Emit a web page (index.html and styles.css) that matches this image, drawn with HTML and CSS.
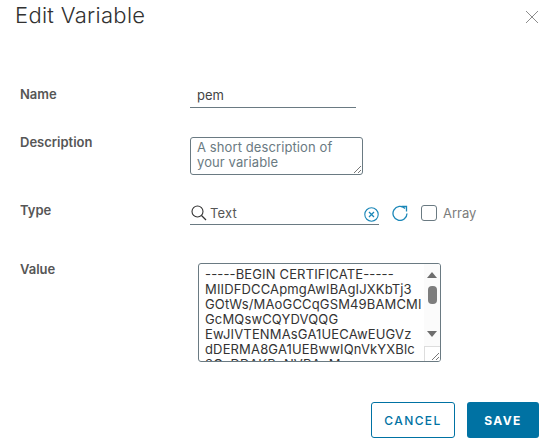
FILE: index.html
```html
<!DOCTYPE html>
<html lang="en">
<head>
    <meta charset="UTF-8">
    <title>Edit Variable</title>
    <link rel="stylesheet" href="styles.css">
</head>
<body>
    <div class="modal">
        <div class="header">
            <h1 class="title">Edit Variable</h1>
            <svg class="close" width="14" height="14" viewBox="0 0 14 14"><path d="M1 1L13 13M13 1L1 13" stroke="#8c8c8c" stroke-width="1" fill="none"/></svg>
        </div>

        <div class="row row-name">
            <div class="label">Name</div>
            <div class="name-input">pem</div>
        </div>

        <div class="row row-desc">
            <div class="label">Description</div>
            <div class="desc-box">
                A short description of<br>your variable
                <svg class="grip" width="9" height="9" viewBox="0 0 9 9"><path d="M1 8L8 1M5 8L8 5" stroke="#777" stroke-width="1" fill="none"/></svg>
            </div>
        </div>

        <div class="row row-type">
            <div class="label">Type</div>
            <div class="type-input">
                <svg class="search" width="16" height="16" viewBox="0 0 16 16"><circle cx="6.5" cy="6.5" r="5.5" stroke="#333" stroke-width="1.1" fill="none"/><path d="M10.5 10.5L15 15" stroke="#333" stroke-width="1.2" fill="none"/></svg>
                <span class="type-text">Text</span>
                <svg class="clear" width="15" height="15" viewBox="0 0 15 15"><circle cx="7.5" cy="7.5" r="6.7" stroke="#1b87b8" stroke-width="1.1" fill="none"/><path d="M5 5L10 10M10 5L5 10" stroke="#1b87b8" stroke-width="1.3" fill="none"/></svg>
            </div>
            <svg class="refresh" width="17" height="17" viewBox="0 0 17 17"><path d="M13 4.5A7 7 0 1 0 15 9.5" stroke="#1b87b8" stroke-width="1.3" fill="none"/><path d="M9.5 2.5H14.5V7.5" stroke="#1b87b8" stroke-width="1.3" fill="none"/></svg>
            <span class="checkbox"></span>
            <span class="check-label">Array</span>
        </div>

        <div class="row row-value">
            <div class="label">Value</div>
            <div class="value-box">
                <div class="value-text">-----BEGIN CERTIFICATE-----<br>MIIDFDCCApmgAwIBAgIJXKbTj3<br>GOtWs/MAoGCCqGSM49BAMCMI<br>GcMQswCQYDVQQG<br>EwJIVTENMAsGA1UECAwEUGVz<br>dDERMA8GA1UEBwwIQnVkYXBlc<br>3QxDDAKBgNVBAoM</div>
                <div class="scrollbar">
                    <span class="arrow-up"></span>
                    <span class="thumb"></span>
                    <span class="arrow-down"></span>
                </div>
                <div class="corner">
                    <svg width="9" height="9" viewBox="0 0 9 9"><path d="M1 8L8 1M5 8L8 5" stroke="#777" stroke-width="1" fill="none"/></svg>
                </div>
            </div>
        </div>

        <div class="footer">
            <button class="btn btn-outline">CANCEL</button>
            <button class="btn btn-primary">SAVE</button>
        </div>
    </div>
</body>
</html>
```

FILE: styles.css
```css
* {
    margin: 0;
    padding: 0;
    box-sizing: border-box;
}

html, body {
    width: 548px;
    height: 445px;
    overflow: hidden;
    background: #fff;
}

body {
    font-family: Inter, "Open Sans", sans-serif;
    color: #565656;
}

.modal {
    padding: 0 9px 0 20px;
}

.header {
    display: flex;
    justify-content: space-between;
    align-items: flex-start;
    height: 75px;
    margin-left: -5px;
}

.title {
    font-size: 22px;
    line-height: 30px;
    font-weight: 300;
    letter-spacing: 0.3px;
    color: #313131;
}

.close {
    margin-top: 10px;
}

.row {
    display: flex;
}

.label {
    width: 170px;
    flex: none;
    font-size: 13px;
    font-weight: 600;
    color: #565656;
    line-height: 18px;
}

.row-name {
    height: 33px;
    align-items: flex-start;
    padding-top: 11px;
}

.row-name .label {
    margin-top: -1px;
}

.name-input {
    width: 166px;
    height: 22px;
    padding: 0 0 0 7px;
    font-size: 13px;
    line-height: 18px;
    border-bottom: 1px solid #6a7a82;
    color: #444;
}

.row-desc {
    padding-top: 29px;
    height: 67px;
}

.row-desc .label {
    margin-top: -4px;
}

.desc-box {
    position: relative;
    width: 173px;
    height: 38px;
    padding: 2px 6px;
    font-size: 13px;
    line-height: 15px;
    letter-spacing: 0.1px;
    color: #6a7a82;
    border: 1px solid #6a7a82;
    border-radius: 3px;
}

.grip {
    position: absolute;
    right: 0;
    bottom: 0;
}

.row-type {
    height: 60px;
    align-items: flex-start;
    margin-top: 26px;
}

.type-input {
    display: flex;
    align-items: center;
    width: 189px;
    height: 24px;
    border-bottom: 1px solid #6a7a82;
}

.search {
    margin-left: 1px;
    flex: none;
}

.type-text {
    margin-left: 3px;
    flex: 1;
    font-size: 13px;
    letter-spacing: 0.2px;
    color: #565656;
}

.clear {
    margin-top: 3px;
    flex: none;
}

.refresh {
    margin: 3px 0 0 13px;
    flex: none;
}

.checkbox {
    width: 16px;
    height: 16px;
    margin: 4px 0 0 12px;
    border: 1px solid #6a7a82;
    border-radius: 3px;
    flex: none;
}

.check-label {
    margin: 3px 0 0 6px;
    font-size: 13px;
    line-height: 18px;
    color: #7c7c7c;
}

.row-value {
    align-items: flex-start;
    margin-top: 3px;
}

.row-value .label {
    margin-top: -4px;
}

.value-box {
    position: relative;
    width: 243px;
    height: 99px;
    margin-left: 8px;
    margin-top: -1px;
    padding: 3px 0 0 6px;
    border: 1px solid #6a7a82;
    border-radius: 3px;
    overflow: hidden;
}

.value-text {
    font-size: 13px;
    line-height: 15px;
    letter-spacing: 0.15px;
    color: #333;
    white-space: nowrap;
}

.scrollbar {
    position: absolute;
    top: 0;
    right: 0;
    width: 16px;
    height: 82px;
    background: #fbfbfb;
    display: flex;
    flex-direction: column;
    align-items: center;
}

.arrow-up {
    margin-top: 8px;
    border-left: 5px solid transparent;
    border-right: 5px solid transparent;
    border-bottom: 6px solid #6e6e6e;
}

.thumb {
    width: 9px;
    height: 18px;
    margin-top: 8px;
    border-radius: 4px;
    background: #7d7d7d;
}

.arrow-down {
    margin-top: 27px;
    border-left: 5px solid transparent;
    border-right: 5px solid transparent;
    border-top: 6px solid #6e6e6e;
}

.corner {
    position: absolute;
    right: 0;
    bottom: 0;
    width: 16px;
    height: 15px;
    background: #fff;
    border: 1px solid #ddd;
    border-right: none;
    border-bottom: none;
    display: flex;
    align-items: flex-end;
    justify-content: flex-end;
}

.footer {
    display: flex;
    justify-content: flex-end;
    gap: 12px;
    margin-top: 40px;
}

.btn {
    height: 36px;
    border-radius: 3px;
    font-family: Inter, "Open Sans", sans-serif;
    font-size: 12px;
    letter-spacing: 1.4px;
    font-weight: 500;
    cursor: pointer;
}

.btn-outline {
    width: 84px;
    background: #fff;
    color: #0072a3;
    border: 1px solid #0072a3;
}

.btn-primary {
    width: 72px;
    background: #0072a3;
    color: #fff;
    border: none;
    font-weight: 700;
}
```
